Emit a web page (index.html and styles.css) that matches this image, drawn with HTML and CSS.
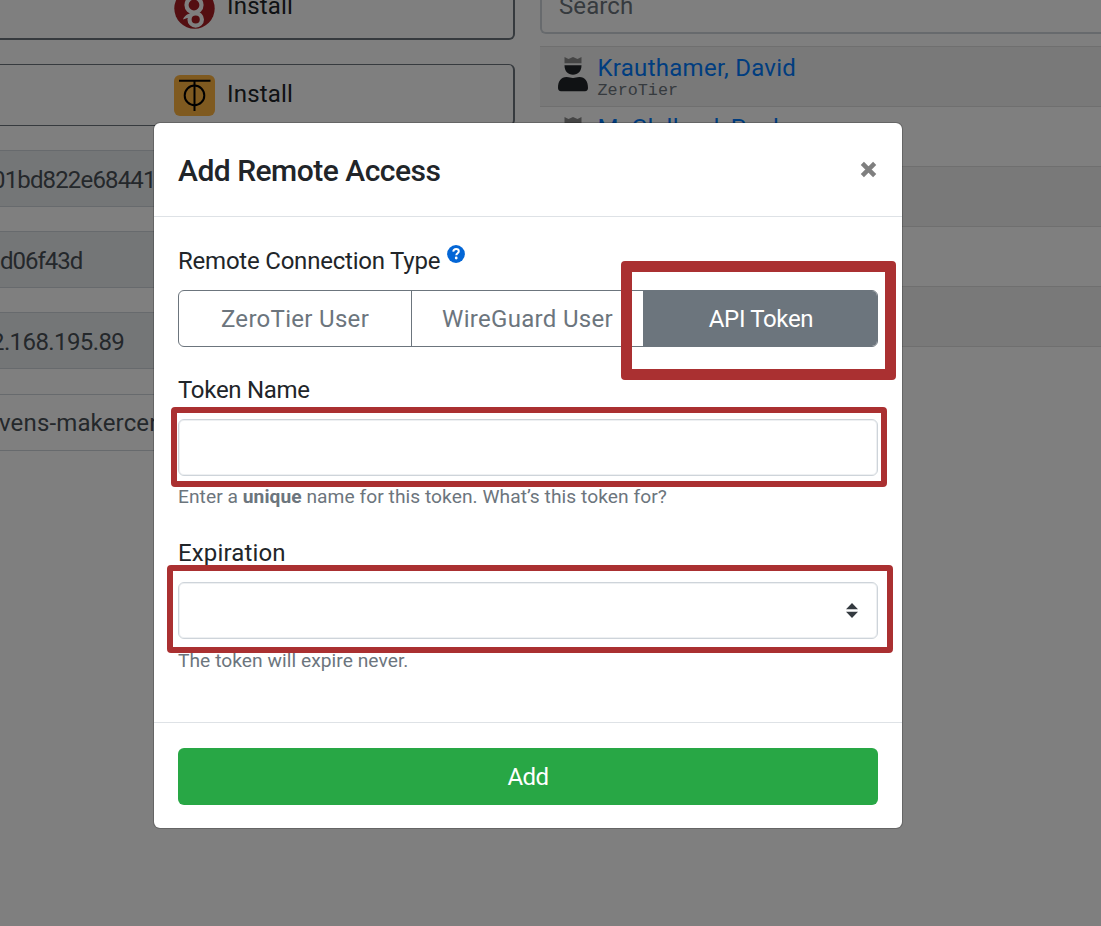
FILE: index.html
```html
<!DOCTYPE html>
<html lang="en">
<head>
<meta charset="utf-8">
<title>Add Remote Access</title>
<link rel="stylesheet" href="styles.css">
</head>
<body>
<div class="screen">
  <main class="page">
    <section class="settings">
      <div class="install">
        <svg class="logo" viewBox="0 0 41 41"><circle cx="20.500" cy="20.500" r="20.200" fill="#a81c22"/><g fill="none" stroke="#fff"><circle cx="20" cy="17" r="7.500" stroke-width="4.200"/><circle cx="21.700" cy="31.500" r="6.200" stroke-width="4.200"/></g><path d="M9 31.500c1.500-4 4.500-5.500 9.500-7l-3 5.500c-2-.3-4 .3-6.500 1.500z" fill="#fff"/></svg>
        <span>Install</span>
      </div>
      <div class="install">
        <svg class="logo" viewBox="0 0 41 41"><rect width="41" height="41" rx="6" fill="#ffb441"/><g fill="none" stroke="#000" stroke-width="2"><path d="M5 5.800h31.500M20.500 5.500v30.500"/><circle cx="20.500" cy="20.400" r="9.800"/></g></svg>
        <span>Install</span>
      </div>
      <div class="field muted hash">01bd822e68441</div>
      <div class="field muted net">d06f43d</div>
      <div class="field muted ip">2.168.195.89</div>
      <div class="field host">vens-makercenter</div>
    </section>
    <section class="users">
      <div class="search">Search</div>
      <ul class="list">
        <li class="row">
          <svg class="avatar" viewBox="0 0 30 35"><path d="M6.500 0l4 2 4.500-2 4.500 2 4-2v6.300h-17z" fill="#8b8b8b"/><path d="M6.500 8.300h17c0 6-3.500 9.500-8.500 9.500s-8.500-3.500-8.500-9.500z" fill="#212529"/><path d="M0 31c0-7 3-11 8.500-11 3 0 4 1 6.500 1s3.500-1 6.500-1c5.500 0 8.500 4 8.500 11 0 2-1 3.200-3 3.200H3c-2 0-3-1.200-3-3.200z" fill="#212529"/></svg>
          <div class="who"><a class="name">Krauthamer, David</a><span class="kind">ZeroTier</span></div>
        </li>
        <li class="row">
          <svg class="avatar" viewBox="0 0 30 35"><path d="M6.500 0l4 2 4.500-2 4.500 2 4-2v6.300h-17z" fill="#8b8b8b"/></svg>
          <div class="who"><a class="name second">McClelland, Paul</a></div>
        </li>
        <li class="row"></li>
        <li class="row"></li>
        <li class="row"></li>
      </ul>
    </section>
  </main>
  <div class="backdrop">
    <div class="modal">
      <header class="modal-head">
        <h1 class="title">Add Remote Access</h1>
        <svg class="close" viewBox="0 0 16 16"><path d="M2.200 2.200l11.600 11.600M13.800 2.200L2.200 13.800" stroke="#7f7f7f" stroke-width="4.200"/></svg>
      </header>
      <div class="modal-body">
        <div class="label"><span class="l-type">Remote Connection Type</span><svg class="help" viewBox="0 0 18 18"><circle cx="9" cy="9" r="8.900" fill="#0366d6"/><path d="M6.200 6.700c.3-2.100 1.500-2.700 2.900-2.700 1.500 0 2.700.9 2.700 2.300 0 1.900-2.500 1.900-2.500 3.900" fill="none" stroke="#fff" stroke-width="2"/><circle cx="9.200" cy="13" r="1.400" fill="#fff"/></svg></div>
        <div class="tabs">
          <div class="tab"><span class="t-zero">ZeroTier User</span></div>
          <div class="tab"><span class="t-wire">WireGuard User</span></div>
          <div class="tab active"><span class="t-api">API Token</span></div>
        </div>
        <div class="label"><span class="l-name">Token Name</span></div>
        <div class="control"></div>
        <div class="hint h-name">Enter a <b>unique</b> name for this token. What’s this token for?</div>
        <div class="label"><span class="l-exp">Expiration</span></div>
        <div class="control select"><svg class="arrows" viewBox="0 0 12 15"><path d="M0 6.200L6 0l6 6.200zM0 8.800h12L6 15z" fill="#343a40"/></svg></div>
        <div class="hint h-exp">The token will expire never.</div>
      </div>
      <footer class="modal-foot"><div class="add"><span>Add</span></div></footer>
    </div>
  </div>
  <div class="mark mark-tab"></div>
  <div class="mark mark-name"></div>
  <div class="mark mark-exp"></div>
</div>
</body>
</html>
```
FILE: styles.css
```css
* { box-sizing: border-box; }
body { margin: 0; background: #fff; color: #212529; font: 400 24px/36px Roboto, "Liberation Sans", sans-serif; }
.screen { position: relative; width: 1101px; height: 926px; overflow: hidden; }
.page { display: grid; grid-template-columns: 515px 561px; column-gap: 25px; height: 926px; }
.settings { margin-top: -23px; display: flex; flex-direction: column; white-space: nowrap; }
.install { display: flex; align-items: center; gap: 12px; height: 63px; margin-bottom: 24px; padding-left: 174px; border: 2px solid #6c757d; border-left: 0; border-radius: 0 6px 6px 0; flex: none; }
.install + .install { height: 62px; border-width: 1px 2px 1px 0; }
.install span { letter-spacing: .2px; padding-bottom: 5px; }
.install + .install span { padding-bottom: 2px; }
.logo { width: 41px; height: 41px; }
.install + .install .logo { margin-top: 1px; }
.field { height: 57px; margin-bottom: 24px; padding-top: 2px; border: 1px solid #ced4da; border-width: 1px 0; display: flex; align-items: center; color: #495057; overflow: hidden; flex: none; }
.muted { background: #e9ecef; }
.hash { text-indent: -8px; letter-spacing: -.85px; }
.net, .ip { margin-bottom: 24.300px; }
.net { letter-spacing: -1px; }
.ip { text-indent: -9px; letter-spacing: -.6px; }
.host { letter-spacing: .15px; text-indent: -1px; }
.search { height: 58px; margin-top: -24px; padding: 11px 17px; border: 2px solid #ced4da; border-right: 0; border-radius: 6px 0 0 6px; color: #6c757d; line-height: 34px; letter-spacing: .1px; }
.list { list-style: none; margin: 12px 0 0; padding: 0; border-bottom: 1px solid #dfdfdf; }
.row { display: flex; height: 60.100px; border-top: 1px solid #dfdfdf; padding: 10px 0 0 17.500px; gap: 10px; }
.row:nth-child(odd) { background: #f2f2f2; }
.avatar { width: 30px; height: 35px; }
.who { display: flex; flex-direction: column; margin-top: -1px; }
.name { color: #007bff; line-height: 24px; letter-spacing: .28px; }
.kind { color: #6c757d; font: 16.800px/22px "Liberation Mono", monospace; }
.backdrop { position: absolute; inset: 0; background: rgba(0,0,0,.5); display: flex; align-items: flex-start; padding: 122px 0 0 153px; }
.modal { width: 750px; height: 707px; background: #fff; background-clip: padding-box; border: 1px solid rgba(0,0,0,.2); border-radius: 7px; }
.modal-head { height: 94px; border-bottom: 1px solid #dee2e6; padding: 0 25px 0 24px; display: flex; align-items: center; justify-content: space-between; }
.title { margin: 2px 0 0; font-size: 30px; font-weight: 500; letter-spacing: -.5px; }
.close { width: 17px; height: 17px; margin-bottom: 1px; }
.modal-body { height: 505px; padding: 25px 24px 0; }
.label { height: 36px; padding-top: 2px; margin-bottom: 12px; display: flex; align-items: center; white-space: nowrap; }
.help { width: 18px; height: 18px; margin: -15px 0 0 7px; }
.l-type { letter-spacing: -.22px; }
.l-name { letter-spacing: -.3px; }
.l-exp { letter-spacing: .15px; }
.t-zero { letter-spacing: .3px; }
.t-wire { letter-spacing: .3px; }
.t-api { letter-spacing: -.35px; }
.tabs { display: grid; grid-template-columns: 233px 232px 235px; height: 57px; border: 1px solid #6c757d; border-radius: 6px; overflow: hidden; margin-bottom: 24px; width: 700px; }
.tab { display: flex; justify-content: center; align-items: center; padding-top: 1px; color: #6c757d; border-right: 1px solid #6c757d; }
.tab.active { background: #6c757d; color: #fff; }
.control { height: 57px; border: 1px solid #ced4da; box-shadow: inset 0 0 0 1px #eef0f2; border-radius: 6px; }
.hint { height: 30px; margin: 6px 0 22px; font-size: 19.200px; line-height: 30px; letter-spacing: .05px; color: #6c757d; white-space: nowrap; }
.h-exp { padding-top: 1px; }
.select { display: flex; align-items: center; justify-content: flex-end; padding-right: 19px; }
.arrows { width: 12px; height: 15px; }
.modal-foot { height: 106px; border-top: 1px solid #dee2e6; padding: 25px 24px 0; }
.add { height: 57px; background: #28a745; border-radius: 6px; color: #fff; display: flex; align-items: center; justify-content: center; letter-spacing: -.5px; }
.mark { position: absolute; border: 6px solid #aa3031; border-radius: 4px; }
.mark-tab { left: 621px; top: 261px; width: 275px; height: 119px; border-width: 11px; }
.mark-name { left: 171px; top: 407px; width: 716px; height: 80px; }
.mark-exp { left: 167px; top: 565px; width: 726px; height: 88px; }
```
